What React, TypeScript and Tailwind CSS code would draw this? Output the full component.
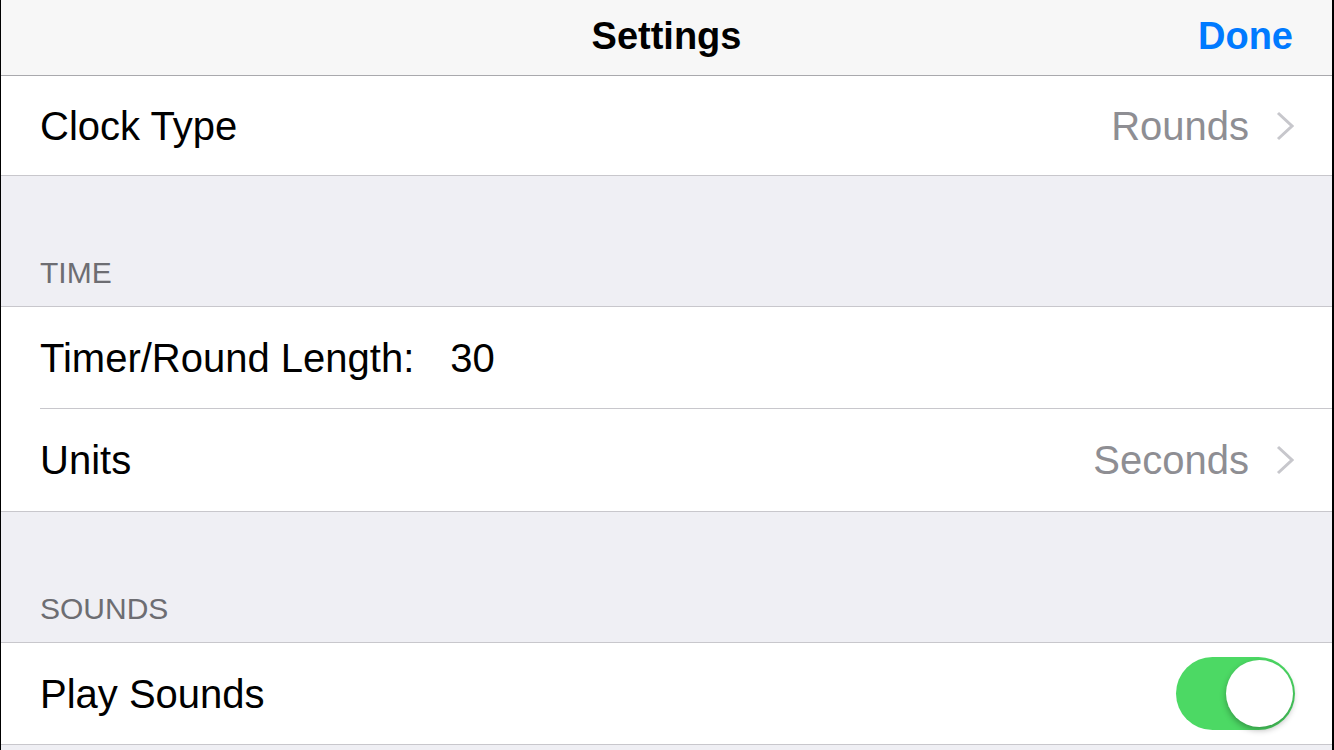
const font = { fontFamily: '"Liberation Sans", Arial, sans-serif' };

const Chevron = () => (
  <svg width="18" height="30" viewBox="0 0 18 30" className="shrink-0">
    <polyline points="2,2 16,15 2,28" fill="none" stroke="#c7c7cc" strokeWidth="3" />
  </svg>
);

const SectionHeader = ({ title }: { title: string }) => (
  <div className="h-[130px] flex items-end pl-[39px] pb-[18px]">
    <span className="text-[30px] leading-none text-[#6d6d72]">{title}</span>
  </div>
);

const DetailRow = ({ label, value, height }: { label: string; value: string; height: string }) => (
  <div className={`${height} flex items-center justify-between pl-[39px] pr-[38px] bg-white`}>
    <span className="text-[40px] leading-none text-black">{label}</span>
    <div className="flex items-center gap-[27px]">
      <span className="text-[40px] leading-none text-[#8e8e93]">{value}</span>
      <Chevron />
    </div>
  </div>
);

const App = () => {
  return (
    <main className="w-full h-screen bg-black pl-[1px] pr-[2px] overflow-hidden" style={font}>
      <div className="h-full bg-[#efeff4] flex flex-col">
        <header className="h-[76px] shrink-0 bg-[#f7f7f7] border-b border-[#a9a9ad] flex items-center justify-between pl-[39px] pr-[39px] pb-[3px]">
          <span className="w-[100px]" />
          <h1 className="text-[38px] font-bold leading-none text-black">Settings</h1>
          <span className="w-[100px] text-right text-[38px] font-bold leading-none text-[#007aff]">Done</span>
        </header>

        <div className="border-b border-[#c8c7cc] shrink-0">
          <DetailRow label="Clock Type" value="Rounds" height="h-[99px]" />
        </div>

        <SectionHeader title="TIME" />
        <div className="border-y border-[#c8c7cc] bg-white shrink-0">
          <div className="h-[101px] flex items-center pl-[39px]">
            <span className="text-[40px] leading-none text-black">Timer/Round Length:</span>
            <span className="text-[40px] leading-none text-black ml-[36px]">30</span>
          </div>
          <div className="ml-[39px] h-px bg-[#c8c7cc]" />
          <DetailRow label="Units" value="Seconds" height="h-[102px]" />
        </div>

        <SectionHeader title="SOUNDS" />
        <div className="border-y border-[#c8c7cc] bg-white shrink-0">
          <div className="h-[101px] flex items-center justify-between pl-[39px] pr-[37px]">
            <span className="text-[40px] leading-none text-black">Play Sounds</span>
            <div className="w-[119px] h-[73px] rounded-full bg-[#4cd964] flex items-center justify-end pr-[2px]">
              <div className="w-[67px] h-[67px] rounded-full bg-white shadow-[0_3px_6px_rgba(0,0,0,0.3)]" />
            </div>
          </div>
        </div>
      </div>
    </main>
  );
};

export default App;
